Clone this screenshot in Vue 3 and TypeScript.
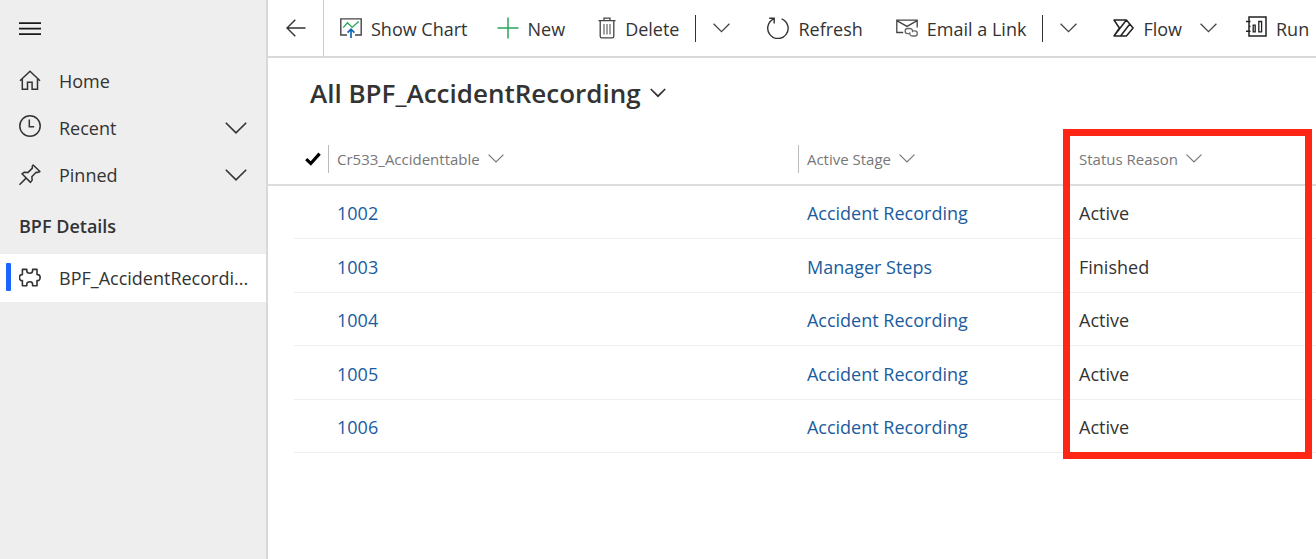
<script setup lang="ts">
import { ref } from 'vue'

interface NavItem {
  id: string
  label: string
  expandable: boolean
}

interface Column {
  id: string
  label: string
}

interface Row {
  id: string
  stage: string
  status: string
}

const navItems: NavItem[] = [
  { id: 'home', label: 'Home', expandable: false },
  { id: 'recent', label: 'Recent', expandable: true },
  { id: 'pinned', label: 'Pinned', expandable: true },
]

const columns: Column[] = [
  { id: 'record', label: 'Cr533_Accidenttable' },
  { id: 'stage', label: 'Active Stage' },
  { id: 'status', label: 'Status Reason' },
]

const rows = ref<Row[]>([
  { id: '1002', stage: 'Accident Recording', status: 'Active' },
  { id: '1003', stage: 'Manager Steps', status: 'Finished' },
  { id: '1004', stage: 'Accident Recording', status: 'Active' },
  { id: '1005', stage: 'Accident Recording', status: 'Active' },
  { id: '1006', stage: 'Accident Recording', status: 'Active' },
])
</script>

<template>
  <div class="app">
    <aside class="sidebar">
      <button class="menu" type="button" aria-label="Toggle navigation">
        <svg width="22" height="14" viewBox="0 0 22 14" fill="none" stroke="#1b1a19" stroke-width="1.8">
          <path d="M0 1.2h22M0 6.7h22M0 12.2h22" />
        </svg>
      </button>
      <nav>
        <a v-for="item in navItems" :key="item.id" class="nav-item" href="#">
          <svg v-if="item.id === 'home'" class="nav-icon" viewBox="0 0 22 22" fill="none" stroke="#333" stroke-width="1.5">
            <path d="M1 10.8 11 1.3l10 9.5M3.3 9v10.2h5.2v-7h4.6v7h5.4V9" />
          </svg>
          <svg v-else-if="item.id === 'recent'" class="nav-icon raised" viewBox="0 0 22 22" fill="none" stroke="#333" stroke-width="1.5">
            <circle cx="11" cy="11" r="10.2" />
            <path d="M10.3 4.5v7.2h4.9" />
          </svg>
          <svg v-else class="nav-icon" viewBox="0 0 22 22" fill="none" stroke="#333" stroke-width="1.5" stroke-linejoin="round">
            <path d="M.5 20.7 7.6 13.6M14.2 1l6.7 6.5-2.2 1-1.6-.2-4.3 4.4.4 3.4-1.7 2.3L3 9.8l2.4-1.6 3.7.2 4.3-4.3-.2-1.7z" />
          </svg>
          <span class="nav-label">{{ item.label }}</span>
          <svg v-if="item.expandable" class="nav-chevron" width="22" height="12" viewBox="0 0 22 12" fill="none" stroke="#333" stroke-width="1.6">
            <path d="m.8.8 10.2 10L21.2.8" />
          </svg>
        </a>
        <h2 class="nav-heading">BPF Details</h2>
        <a class="nav-item selected" href="#" aria-current="page">
          <svg class="nav-icon" viewBox="0 0 22 22" fill="none" stroke="#333" stroke-width="1.6" stroke-linejoin="round">
            <path d="M3.4 2.4h4.4v1.4c0 1.5 1.2 2.5 2.9 2.5s2.9-1 2.9-2.5V2.4H18v5.2h.8a2.2 2.8 0 0 1 0 6H18v5.2h-4.4v-1.6c0-1.5-1.2-2.4-2.9-2.4s-2.9.9-2.9 2.4v1.6H3.4v-5.2h-.6a2.2 2.8 0 0 1 0-6h.6z" />
          </svg>
          <span class="nav-label">BPF_AccidentRecordi...</span>
        </a>
      </nav>
    </aside>

    <main class="main">
      <header class="commands">
        <button class="back" type="button" aria-label="Go back">
          <svg width="20" height="18" viewBox="0 0 20 18" fill="none" stroke="#333" stroke-width="1.4">
            <path d="M19.5 9H1M9.3.8 1 9l8.3 8.2" />
          </svg>
        </button>
        <div class="bar">
          <button class="command" type="button">
            <svg width="22" height="22" viewBox="0 0 22 22" fill="none" stroke-width="1.4">
              <path d="M7 18H.8V1.9h20.4V18H15" stroke="#444" />
              <path d="m3.2 10.6 4.3-4.9 4.7 4.7 6.5-5.8" stroke="#28a65a" />
              <path d="M11 21V12.4M7.6 15.6 11 12.2l3.4 3.4" stroke="#1665b5" stroke-width="1.7" />
            </svg>
            <span>Show Chart</span>
          </button>
          <button class="command" type="button">
            <svg width="22" height="22" viewBox="0 0 22 22" fill="none" stroke="#28a65a" stroke-width="1.5">
              <path d="M11 .5v21M.5 11h21" />
            </svg>
            <span>New</span>
          </button>
          <div class="split">
            <button class="command" type="button">
              <svg width="18" height="22" viewBox="0 0 18 22" fill="none" stroke="#444" stroke-width="1.3">
                <path d="M.5 3.6h17M6 3.4V1.2h6v2.2M2.2 3.8v15.5c0 1.1.6 1.6 1.6 1.6h10.4c1 0 1.6-.5 1.6-1.6V3.8" />
                <path d="M6 7v10.5M9 7v10.5M12 7v10.5" stroke-width="1" />
              </svg>
              <span>Delete</span>
            </button>
            <button class="more" type="button" aria-label="More delete options">
              <svg width="17" height="10" viewBox="0 0 17 10" fill="none" stroke="#444" stroke-width="1.3">
                <path d="m.6.8 7.9 7.8L16.4.8" />
              </svg>
            </button>
          </div>
          <button class="command" type="button">
            <svg width="23" height="22" viewBox="0 0 23 22" fill="none" stroke="#333" stroke-width="1.4">
              <path d="M15.6 1.8A10.2 10.2 0 1 1 8 1.9M3.2 1.3h5v5.2" />
            </svg>
            <span>Refresh</span>
          </button>
          <div class="split">
            <button class="command" type="button">
              <svg width="22" height="18" viewBox="0 0 22 18" fill="none" stroke="#444" stroke-width="1.3">
                <path d="M7.2 13.5H.8V1.2h20.4v7.3M.8 1.6 11 7.4l10.2-5.8" />
                <path d="M13.2 14.7h-1.5a2.6 2.6 0 0 1 0-5.2h2.2c2 0 3.2 2 2.4 3.6M16.3 11.8h2.4a2.6 2.6 0 0 1 0 5.2h-2.4c-2 0-3.2-2-2.2-3.7" stroke="#666" />
              </svg>
              <span>Email a Link</span>
            </button>
            <button class="more" type="button" aria-label="More email options">
              <svg width="17" height="10" viewBox="0 0 17 10" fill="none" stroke="#444" stroke-width="1.3">
                <path d="m.6.8 7.9 7.8L16.4.8" />
              </svg>
            </button>
          </div>
          <button class="command" type="button">
            <svg width="21" height="18" viewBox="0 0 21 18" fill="none" stroke="#222" stroke-width="1.5" stroke-linejoin="round">
              <path d="M1 17 6.4 9 1 1h12.4l6.7 8-6.7 8zL13.4 1M7.6 17l9.2-12" />
            </svg>
            <span>Flow</span>
            <svg class="flow-chevron" width="17" height="10" viewBox="0 0 17 10" fill="none" stroke="#444" stroke-width="1.3">
              <path d="m.6.8 7.9 7.8L16.4.8" />
            </svg>
          </button>
          <button class="command" type="button">
            <svg class="raised" width="21" height="21" viewBox="0 0 21 21" fill="none" stroke="#222" stroke-width="1.5">
              <path d="M3 .9h17v19H3zM0 5.5h4.5M0 15.3h4.5M3 10.5h1.5" />
              <path d="M7.2 9.2h2v6.6h-2zM12.8 5.5h2.8v10.3h-2.8z" stroke-width="1.3" />
            </svg>
            <span>Run</span>
          </button>
        </div>
      </header>

      <h1 class="title">
        <button class="view-picker" type="button">
          <span>All BPF_AccidentRecording</span>
          <svg width="16" height="10" viewBox="0 0 16 10" fill="none" stroke="#333" stroke-width="1.7">
            <path d="m.8 1 7.2 7.2L15.2 1" />
          </svg>
        </button>
      </h1>

      <div class="grid">
        <table>
          <colgroup>
            <col class="col-check" />
            <col class="col-record" />
            <col class="col-stage" />
            <col class="col-status" />
          </colgroup>
          <thead>
            <tr>
              <th scope="col" class="check">
                <button type="button" aria-label="Select all rows">
                  <svg width="16" height="14" viewBox="0 0 16 14" fill="none" stroke="#000" stroke-width="3.2">
                    <path d="m1.2 7.2 4.6 4.3L14.6 1.6" />
                  </svg>
                </button>
              </th>
              <th v-for="column in columns" :key="column.id" scope="col" :class="column.id">
                <button class="sort" type="button">
                  <span>{{ column.label }}</span>
                  <svg width="16" height="9" viewBox="0 0 16 9" fill="none" stroke="#777" stroke-width="1.2">
                    <path d="m.6.6 7.4 7.3L15.4.6" />
                  </svg>
                </button>
              </th>
            </tr>
          </thead>
          <tbody>
            <tr v-for="row in rows" :key="row.id">
              <td class="check"></td>
              <td><a href="#">{{ row.id }}</a></td>
              <td><a href="#">{{ row.stage }}</a></td>
              <td>{{ row.status }}</td>
            </tr>
          </tbody>
        </table>
        <div class="highlight" aria-hidden="true"></div>
      </div>
    </main>
  </div>
</template>

<style>
body {
  background: #fff;
}
</style>

<style scoped>
.app {
  display: flex;
  min-height: 100vh;
  font-family: "Open Sans", "Noto Sans", sans-serif;
  font-size: 18px;
  line-height: 24px;
  color: #333;
  overflow: hidden;
}

button {
  padding: 0;
  border: 0;
  background: none;
  color: inherit;
  font: inherit;
  cursor: pointer;
}

svg {
  display: block;
  flex: none;
}

a {
  text-decoration: none;
}

.sidebar {
  flex: none;
  box-sizing: border-box;
  width: 268px;
  border-right: 2px solid #d9d9d9;
  background: #eee;
}

.menu {
  display: flex;
  align-items: center;
  height: 57px;
  padding-left: 19px;
}

.nav-item {
  position: relative;
  display: flex;
  align-items: center;
  height: 47px;
  padding: 0 19px;
  color: #333;
}

.nav-icon {
  width: 22px;
  height: 22px;
  margin-right: 18px;
}

.raised {
  margin-bottom: 4px;
}

.nav-label {
  flex: 1;
  min-width: 0;
  white-space: nowrap;
}

.nav-heading {
  margin: 0;
  padding: 16px 19px;
  font-size: 18px;
  font-weight: 600;
  line-height: 24px;
}

.selected {
  height: 48px;
  padding-right: 12px;
  background: #fff;
}

.selected::before {
  content: "";
  position: absolute;
  left: 6px;
  top: 9px;
  width: 5px;
  height: 28px;
  border-radius: 1px;
  background: #1a66ff;
}

.main {
  flex: 1;
  min-width: 0;
}

.commands {
  display: flex;
  height: 56px;
  border-bottom: 2px solid #d9d9d9;
}

.back {
  display: flex;
  flex: none;
  align-items: center;
  justify-content: center;
  width: 56px;
  border-right: 1px solid #ccc;
}

.bar {
  display: flex;
  flex: 1;
  align-items: center;
  gap: 29px;
  min-width: 0;
  padding-left: 16px;
  overflow: hidden;
}

.command {
  display: flex;
  flex: none;
  align-items: center;
  gap: 9px;
  white-space: nowrap;
}

.command span {
  padding-top: 2px;
}

.split {
  display: flex;
  flex: none;
  align-items: center;
  gap: 16px;
  margin: 0 7px 0 4px;
}

.more {
  display: flex;
  align-items: center;
  height: 27px;
  padding-left: 17px;
  border-left: 1px solid #333;
}

.flow-chevron {
  margin-left: 9px;
}

.title {
  margin: 0;
  padding: 18px 42px 19px;
  font-size: 26px;
  font-weight: 600;
  line-height: 34px;
}

.view-picker {
  display: flex;
  align-items: center;
  gap: 9px;
}

.grid {
  position: relative;
}

table {
  width: 100%;
  border-collapse: separate;
  border-spacing: 0;
  table-layout: fixed;
}

.col-check {
  width: 60px;
}

.col-record {
  width: 57%;
}

.col-stage {
  width: 33%;
}

.col-status {
  width: 246px;
}

th {
  box-sizing: border-box;
  height: 57px;
  padding: 4px 0 0;
  border-bottom: 2px solid #ddd;
  color: #777;
  font-size: 15px;
  font-weight: 400;
  text-align: left;
}

th button {
  display: flex;
  align-items: center;
}

th.check button {
  margin-left: 37px;
}

.sort {
  box-sizing: border-box;
  height: 28px;
  padding-left: 9px;
  gap: 8px;
}

.record .sort,
.stage .sort {
  padding-left: 8px;
  border-left: 1px solid #bbb;
}

td {
  box-sizing: border-box;
  height: 53px;
  padding: 2px 0 0 9px;
  border-bottom: 1px solid #efefef;
}

tbody tr:nth-child(even) td {
  height: 54px;
}

td.check {
  border-bottom: 0;
  background: linear-gradient(#efefef, #efefef) right bottom / 34px 1px no-repeat;
}

td a {
  color: #1a5c9e;
}

.highlight {
  position: absolute;
  top: 0;
  right: 4px;
  bottom: -6px;
  box-sizing: border-box;
  width: 249px;
  border: 7px solid #ff2616;
  pointer-events: none;
}
</style>
